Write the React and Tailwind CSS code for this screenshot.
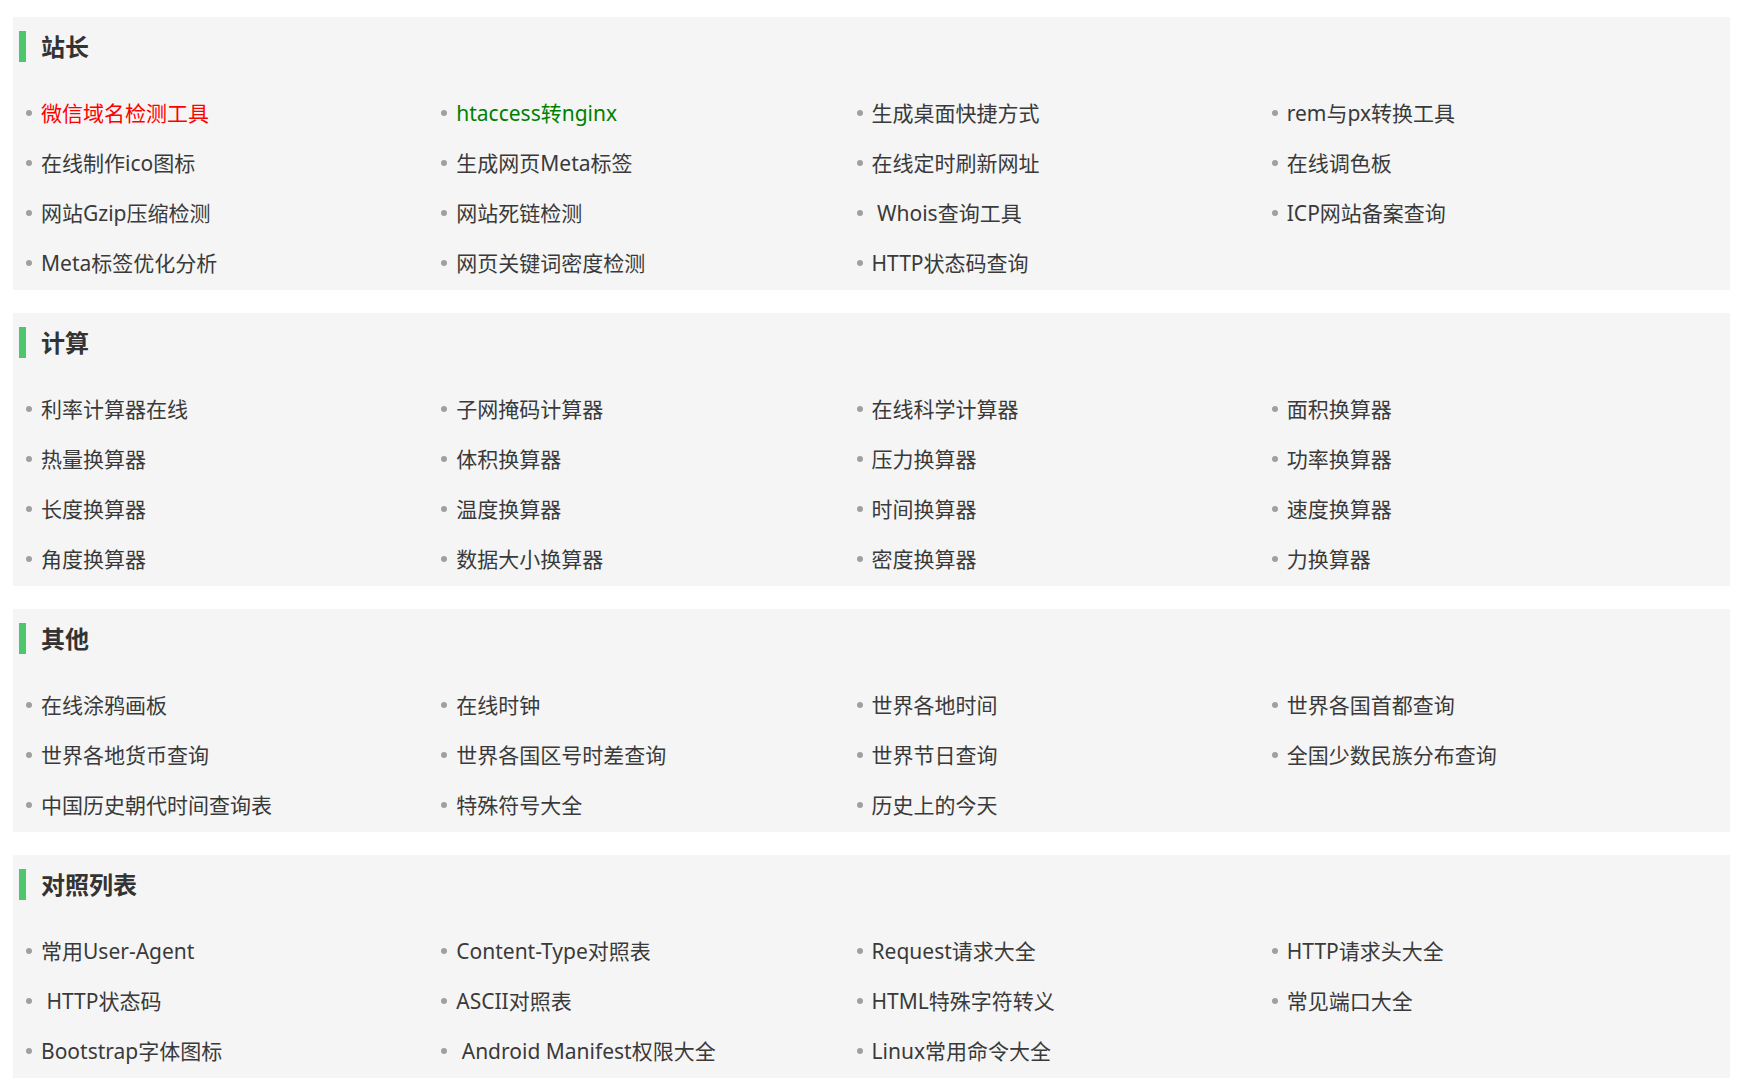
import React from "react";

const sections = [
  {
    title: "站长",
    items: [
      { t: "微信域名检测工具", c: "text-[#ff0000]" },
      { t: "htaccess转nginx", c: "text-[#008000]" },
      { t: "生成桌面快捷方式" },
      { t: "rem与px转换工具" },
      { t: "在线制作ico图标" },
      { t: "生成网页Meta标签" },
      { t: "在线定时刷新网址" },
      { t: "在线调色板" },
      { t: "网站Gzip压缩检测" },
      { t: "网站死链检测" },
      { t: "\u00a0Whois查询工具" },
      { t: "ICP网站备案查询" },
      { t: "Meta标签优化分析" },
      { t: "网页关键词密度检测" },
      { t: "HTTP状态码查询" },
    ],
  },
  {
    title: "计算",
    items: [
      { t: "利率计算器在线" },
      { t: "子网掩码计算器" },
      { t: "在线科学计算器" },
      { t: "面积换算器" },
      { t: "热量换算器" },
      { t: "体积换算器" },
      { t: "压力换算器" },
      { t: "功率换算器" },
      { t: "长度换算器" },
      { t: "温度换算器" },
      { t: "时间换算器" },
      { t: "速度换算器" },
      { t: "角度换算器" },
      { t: "数据大小换算器" },
      { t: "密度换算器" },
      { t: "力换算器" },
    ],
  },
  {
    title: "其他",
    items: [
      { t: "在线涂鸦画板" },
      { t: "在线时钟" },
      { t: "世界各地时间" },
      { t: "世界各国首都查询" },
      { t: "世界各地货币查询" },
      { t: "世界各国区号时差查询" },
      { t: "世界节日查询" },
      { t: "全国少数民族分布查询" },
      { t: "中国历史朝代时间查询表" },
      { t: "特殊符号大全" },
      { t: "历史上的今天" },
    ],
  },
  {
    title: "对照列表",
    items: [
      { t: "常用User-Agent" },
      { t: "Content-Type对照表" },
      { t: "Request请求大全" },
      { t: "HTTP请求头大全" },
      { t: "\u00a0HTTP状态码" },
      { t: "ASCII对照表" },
      { t: "HTML特殊字符转义" },
      { t: "常见端口大全" },
      { t: "Bootstrap字体图标" },
      { t: "\u00a0Android Manifest权限大全" },
      { t: "Linux常用命令大全" },
    ],
  },
];

function Section({ title, items }) {
  return (
    <section className="bg-[#f5f5f5] pt-[14px] pb-[2px]">
      <div className="flex h-[31px] items-center pl-[6px]">
        <span className="h-full w-[7px] bg-[#4ec66e]" />
        <h2 className="ml-[15px] text-[24px] font-bold leading-none text-[#333]">{title}</h2>
      </div>
      <ul className="mt-[26px] grid grid-cols-4 pl-[13px] pr-[43px]">
        {items.map((it, i) => (
          <li key={i} className="flex h-[50px] items-center">
            <span className="h-[6px] w-[6px] shrink-0 rounded-full bg-[#a0a0a0]" />
            <span className={"ml-[9px] whitespace-pre text-[21px] leading-none " + (it.c || "text-[#3a3a3a]")}>{it.t}</span>
          </li>
        ))}
      </ul>
    </section>
  );
}

export default function App() {
  return (
    <div
      className="min-h-[1081px] bg-white pt-[17px]"
      style={{ fontFamily: '"Noto Sans", "Noto Sans CJK SC", sans-serif' }}
    >
      <div className="ml-[13px] flex w-[1717px] flex-col gap-[23px]">
        {sections.map((s) => (
          <Section key={s.title} {...s} />
        ))}
      </div>
    </div>
  );
}
